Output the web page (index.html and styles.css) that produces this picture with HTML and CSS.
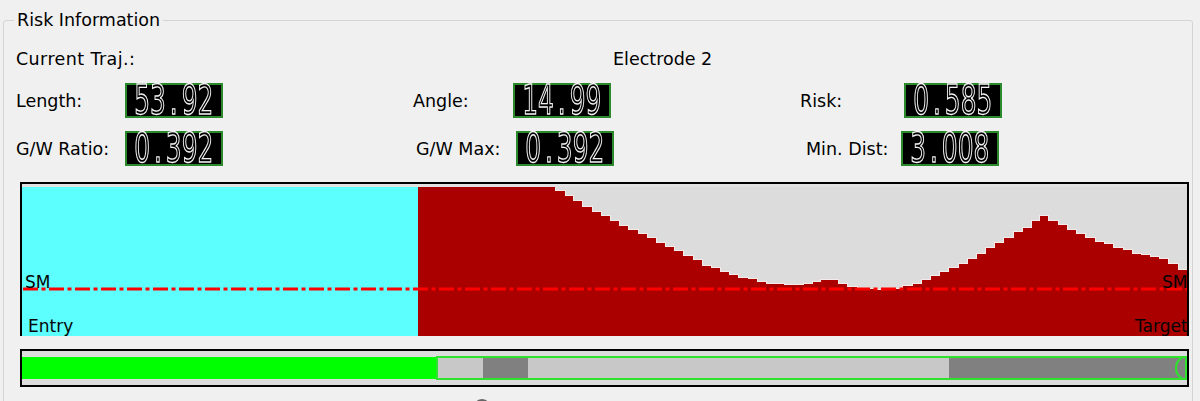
FILE: index.html
```html
<!DOCTYPE html>
<html lang="en">
<head>
<meta charset="utf-8">
<title>Risk Information</title>
<link rel="stylesheet" href="styles.css">
</head>
<body>
<fieldset class="group">
  <legend>Risk Information</legend>
  <div class="info">
    <div class="row row-traj">
      <span class="traj-label">Current Traj.:</span>
      <span class="traj-name">Electrode 2</span>
    </div>
    <div class="row row-a">
      <div class="field length"><span class="label">Length:</span><div class="lcd"><span class="digits">53<span class="dp">.</span>92</span></div></div>
      <div class="field angle"><span class="label">Angle:</span><div class="lcd"><span class="digits">14<span class="dp">.</span>99</span></div></div>
      <div class="field risk"><span class="label">Risk:</span><div class="lcd"><span class="digits">0<span class="dp">.</span>585</span></div></div>
    </div>
    <div class="row row-b">
      <div class="field ratio"><span class="label">G/W Ratio:</span><div class="lcd"><span class="digits">0<span class="dp">.</span>392</span></div></div>
      <div class="field gwmax"><span class="label">G/W Max:</span><div class="lcd"><span class="digits">0<span class="dp">.</span>392</span></div></div>
      <div class="field mindist"><span class="label">Min. Dist:</span><div class="lcd"><span class="digits">3<span class="dp">.</span>008</span></div></div>
    </div>
  </div>

  <div class="chart">
    <svg class="plot" width="1165" height="149" viewBox="0 0 1165 149">
      <rect x="0" y="0" width="1165" height="149" fill="#dcdcdc"/>
      <rect x="0" y="0" width="396" height="149" fill="#5cfefe"/>
      <path fill="#aa0000" shape-rendering="crispEdges" d="M396 149V0H533V3H543V8H551V13H560V19H570V24H579V28H588V33H597V38H606V42H616V46H625V50H634V55H643V59H652V63H661V68H671V72H680V78H689V80H698V84H707V87H716V90H726V91H735V94H744V96H762V97H781V96H790V94H798V92H816V96H825V99H835V101H855V102H865V101H880V98H890V96H899V92H908V88H917V84H926V80H936V76H945V71H954V66H963V60H972V55H981V50H991V44H1000V40H1009V33H1017V28H1026V33H1036V37H1045V42H1054V46H1063V50H1073V54H1082V56H1091V60H1101V62H1110V66H1119V67H1128V69H1137V71H1146V76H1156V82H1165V149Z"/>
      <path fill="none" stroke="#f6eaea" stroke-width="1" shape-rendering="crispEdges" d="M533 0.5V3.5H543V8.5H551V13.5H560V19.5H570V24.5H579V28.5H588V33.5H597V38.5H606V42.5H616V46.5H625V50.5H634V55.5H643V59.5H652V63.5H661V68.5H671V72.5H680V78.5H689V80.5H698V84.5H707V87.5H716V90.5H726V91.5H735V94.5H744V96.5H762V97.5H781V96.5H790V94.5H798V92.5H816V96.5H825V99.5H835V101.5H855V102.5H865V101.5H880V98.5H890V96.5H899V92.5H908V88.5H917V84.5H926V80.5H936V76.5H945V71.5H954V66.5H963V60.5H972V55.5H981V50.5H991V44.5H1000V40.5H1009V33.5H1017V28.5H1026V33.5H1036V37.5H1045V42.5H1054V46.5H1063V50.5H1073V54.5H1082V56.5H1091V60.5H1101V62.5H1110V66.5H1119V67.5H1128V69.5H1137V71.5H1146V76.5H1156V82.5H1165"/>
      <line x1="1" y1="102" x2="1165" y2="102" stroke="#ff0000" stroke-width="3" stroke-dasharray="15 3.5 4 3.5"/>
      <text class="plot-label" x="3" y="101">SM</text>
      <text class="plot-label" x="6" y="145">Entry</text>
      <text class="plot-label" x="1140" y="101">SM</text>
      <text class="plot-label" x="1113" y="145">Target</text>
    </svg>
  </div>

  <div class="bar">
    <div class="track">
      <div class="seg seg-done" style="width:414px"></div>
      <div class="seg seg-light" style="width:47px"></div>
      <div class="seg seg-dark" style="width:45px"></div>
      <div class="seg seg-light" style="width:421px"></div>
      <div class="seg seg-dark" style="width:238px"></div>
    </div>
    <div class="range"><div class="cursor"></div></div>
  </div>

  <div class="toggle"></div>
</fieldset>
</body>
</html>
```

FILE: styles.css
```css
html, body {
  margin: 0;
  padding: 0;
}

body {
  background: #f0f0f0;
  font-family: "DejaVu Sans", "Noto Sans", sans-serif;
  font-size: 17.5px;
  color: #000;
  overflow: hidden;
}

.group {
  margin: 10px 7px 0 3px;
  padding: 0;
  border: 1px solid #d4d4d4;
  border-radius: 3px;
  min-height: 430px;
  min-inline-size: 0;
}

.group legend {
  margin-left: 10px;
  padding: 0 3px;
  line-height: 20px;
}

.info {
  padding: 19px 0 0 12px;
}

.row {
  display: flex;
  align-items: center;
}

.row-traj {
  height: 20px;
  line-height: 20px;
  margin-bottom: 14px;
}

.traj-label {
  width: 597px;
  letter-spacing: 0.4px;
}

.row-a {
  height: 35px;
  margin-bottom: 13px;
}

.row-b {
  height: 35px;
}

.field {
  display: flex;
  align-items: center;
}

.label {
  line-height: 20px;
}

.row-a .length { width: 397px; }
.row-a .length .label { width: 109px; }
.row-a .angle { width: 387px; }
.row-a .angle .label { width: 100px; }
.row-a .risk .label { width: 104px; }

.row-b .ratio { width: 400px; }
.row-b .ratio .label { width: 109px; }
.row-b .gwmax { width: 390px; }
.row-b .gwmax .label { width: 100px; }
.row-b .mindist .label { width: 95px; }

.lcd {
  width: 98px;
  height: 35px;
  box-sizing: border-box;
  background: #000;
  border: 2px solid #2b8a2b;
  display: flex;
  align-items: center;
  justify-content: flex-end;
  padding-right: 8px;
}

.digits {
  display: inline-block;
  font-family: "DejaVu Sans", sans-serif;
  font-size: 40px;
  font-weight: normal;
  line-height: 31px;
  color: #000;
  -webkit-text-stroke: 1.4px #f4f4f4;
  transform: scaleX(0.62);
  transform-origin: 100% 50%;
  white-space: nowrap;
  filter: grayscale(1);
}

.dp {
  display: inline-block;
  width: 25.4px;
  text-align: center;
}

.chart {
  margin: 16px 0 0 16px;
  width: 1165px;
  border: 2px solid #000;
  border-bottom: 0;
  padding-top: 3px;
  background: #e2e2e2;
}

.plot {
  display: block;
}

.plot-label {
  font-family: "DejaVu Sans", sans-serif;
  font-size: 17px;
  fill: #050505;
}

.bar {
  position: relative;
  margin: 13px 0 0 16px;
  width: 1165px;
  border: 2px solid #000;
  background: #dcdcdc;
  padding: 6px 0;
}

.track {
  display: flex;
  height: 22px;
}

.seg {
  height: 100%;
  flex: none;
}

.seg-done { background: #00ff00; }
.seg-light { background: #c8c8c8; }
.seg-dark { background: #808080; }

.range {
  position: absolute;
  left: 414px;
  right: 0;
  top: 5px;
  height: 24px;
  box-sizing: border-box;
  border: 2px solid #2ee22e;
  overflow: hidden;
}

.cursor {
  position: absolute;
  left: 737px;
  top: -3px;
  width: 26px;
  height: 26px;
  box-sizing: border-box;
  border: 2px solid #2ee22e;
  border-radius: 50%;
}

.toggle {
  margin: 12px 0 0 469px;
  width: 18px;
  height: 18px;
  box-sizing: border-box;
  border: 2px solid #666;
  border-radius: 50%;
}
```
